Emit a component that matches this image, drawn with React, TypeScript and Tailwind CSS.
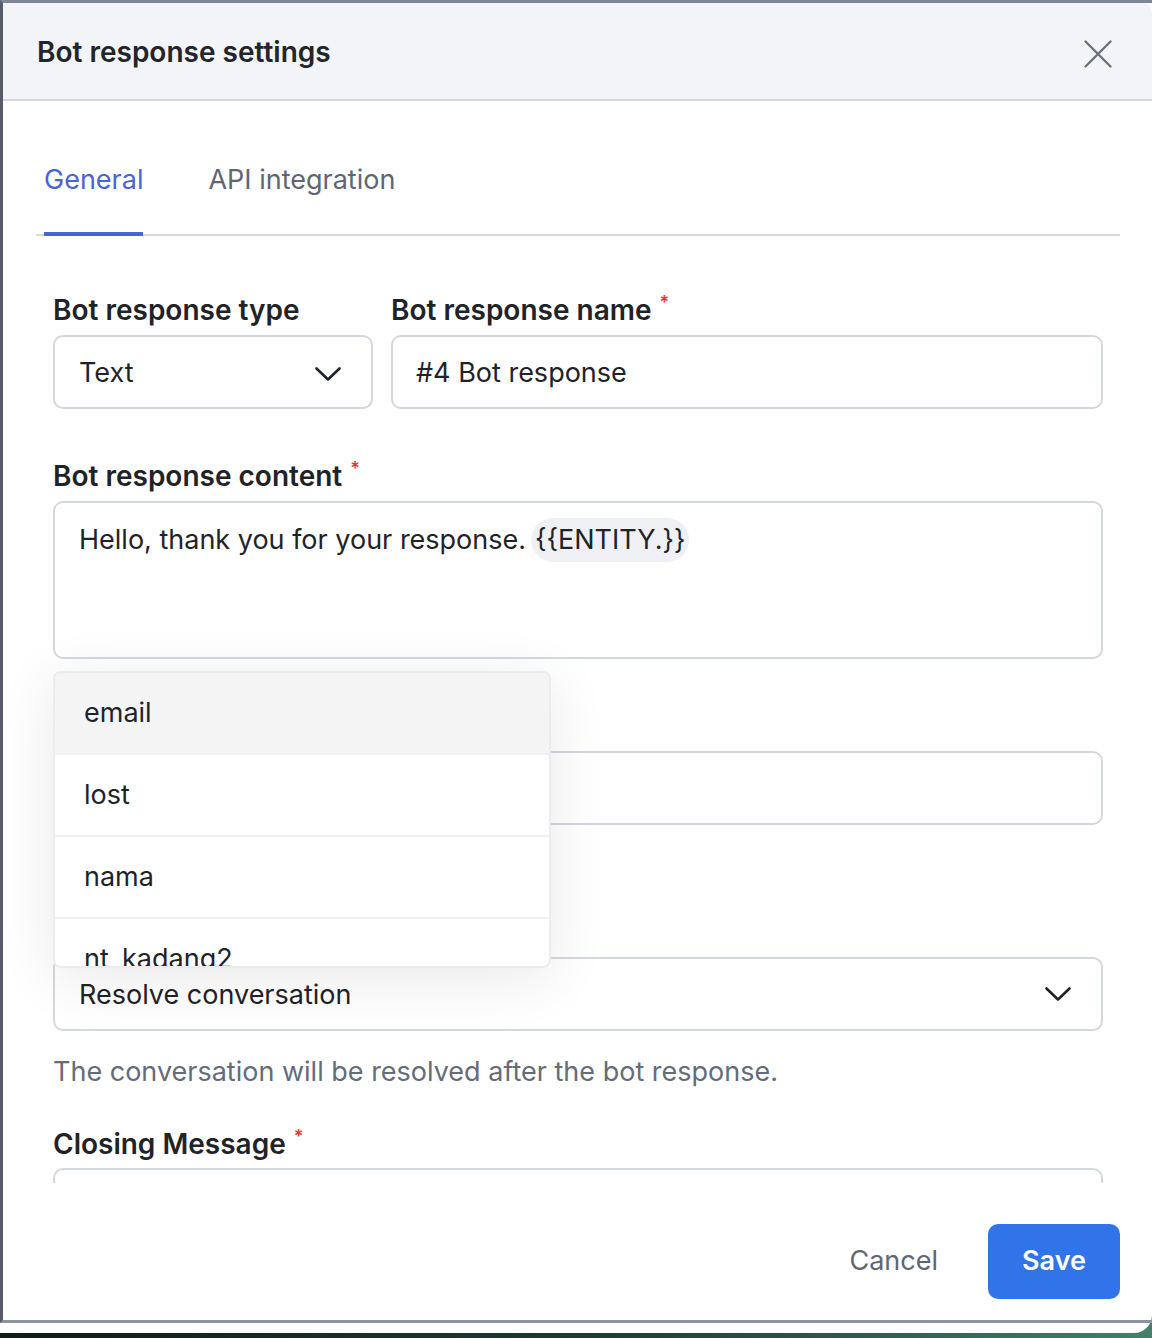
import { useState } from "react";

const font = { fontFamily: "Inter, 'Noto Sans', sans-serif" };

function Label({ text, required }: { text: string; required?: boolean }) {
  return (
    <div className="text-[28px] leading-[32px] font-semibold text-[#1f2328] whitespace-nowrap">
      {text}
      {required && (
        <span className="ml-[8px] align-top text-[18px] leading-[18px] font-semibold text-[#e03b3b]">*</span>
      )}
    </div>
  );
}

function Chevron() {
  return (
    <svg width="26" height="14" viewBox="0 0 26 14" fill="none" className="shrink-0">
      <path d="M1.5 1.5 L13 12.5 L24.5 1.5" stroke="#1f2328" strokeWidth="2.6" strokeLinecap="round" strokeLinejoin="round" />
    </svg>
  );
}

const options = ["email", "lost", "nama", "nt_kadang2"];

export default function App() {
  const [tab, setTab] = useState("general");

  return (
    <div style={font} className="h-[1338px] w-full bg-gradient-to-r from-[#0e1c1b] via-[#1d3a34] to-[#43806b]">
      <div className="h-[1333px] bg-white rounded-br-[18px] flex flex-col">
        <div className="h-[1323px] flex flex-col border-t-[3px] border-l-[3px] border-b-[3px] border-t-[#7e8797] border-l-[#575c66] border-b-[#8d94a0]">
          {/* header */}
          <div className="h-[98px] shrink-0 flex items-center justify-between bg-[#f3f4f8] border-b-2 border-[#d3d6dc] pl-[34px] pr-[40px] rounded-tr-[10px]">
            <h2 className="mt-[2px] text-[28px] font-semibold text-[#22252a]">Bot response settings</h2>
            <button className="p-0 mt-[6px]">
              <svg width="28" height="28" viewBox="0 0 28 28" fill="none">
                <path d="M1.5 1.5 L26.5 26.5 M26.5 1.5 L1.5 26.5" stroke="#6b717c" strokeWidth="2.4" strokeLinecap="round" />
              </svg>
            </button>
          </div>

          {/* body */}
          <div className="h-[1082px] shrink-0 overflow-hidden pl-[33px] pr-[32px]">
            <div className="flex gap-[65px] pl-[8px] pt-[63px] border-b-2 border-[#d6d9de]">
              <button
                onClick={() => setTab("general")}
                className={`-mb-[2px] pb-[36px] border-b-[4px] text-[27px] leading-[32px] ${
                  tab === "general" ? "border-[#4a63d7] text-[#4a63d7]" : "border-transparent text-[#5f6672]"
                }`}
              >
                General
              </button>
              <button
                onClick={() => setTab("api")}
                className={`-mb-[2px] pb-[36px] border-b-[4px] text-[27px] leading-[32px] ${
                  tab === "api" ? "border-[#4a63d7] text-[#4a63d7]" : "border-transparent text-[#5f6672]"
                }`}
              >
                API integration
              </button>
            </div>

            <div className="px-[17px]">
              {/* row 1 */}
              <div className="mt-[58px] flex gap-[18px]">
                <div className="w-[320px] flex flex-col gap-[9px]">
                  <Label text="Bot response type" />
                  <div className="h-[74px] flex items-center justify-between border-2 border-[#d4d7dd] rounded-[10px] pl-[24px] pr-[30px] pt-[3px] text-[27px] text-[#1f2328]">
                    <span>Text</span>
                    <Chevron />
                  </div>
                </div>
                <div className="flex-1 flex flex-col gap-[9px]">
                  <Label text="Bot response name" required />
                  <div className="h-[74px] flex items-center border-2 border-[#d4d7dd] rounded-[10px] px-[23px] pt-[3px] text-[27px] text-[#1f2328]">
                    #4 Bot response
                  </div>
                </div>
              </div>

              {/* content */}
              <div className="mt-[51px] flex flex-col gap-[9px]">
                <Label text="Bot response content" required />
                <div className="relative">
                  <div className="h-[158px] border-2 border-[#d4d7dd] rounded-[10px] pl-[24px] pr-[24px] pt-[15px] text-[27px] text-[#1f2328]">
                    <div className="flex items-center h-[44px]">
                      <span>Hello, thank you for your response.</span>
                      <span className="ml-[5px] h-[44px] flex items-center rounded-full bg-[#eff0f3] px-[4px]">
                        {"{{ENTITY.}}"}
                      </span>
                    </div>
                  </div>

                  {/* entity dropdown */}
                  <div className="absolute left-0 top-full mt-[12px] z-10 w-[498px] h-[297px] overflow-hidden rounded-[8px] border-2 border-[#ececee] bg-white shadow-[0_10px_60px_rgba(0,0,0,0.09)]">
                    {options.map((o, i) => (
                      <div
                        key={o}
                        className={`flex items-center pl-[29px] text-[27px] text-[#1f2328] ${
                          i === 0 ? "h-[80px] bg-[#f4f4f5]" : "h-[82px] border-t-2 border-[#f1f1f3]"
                        }`}
                      >
                        {o}
                      </div>
                    ))}
                  </div>
                </div>
              </div>

              {/* field under the dropdown */}
              <div className="mt-[51px] flex flex-col gap-[9px]">
                <div className="h-[32px]" />
                <div className="h-[74px] border-2 border-[#d4d7dd] rounded-[10px]" />
              </div>

              {/* after response */}
              <div className="mt-[91px] flex flex-col gap-[9px]">
                <div className="h-[32px]" />
                <div className="h-[74px] flex items-center justify-between border-2 border-[#d4d7dd] rounded-[10px] pl-[24px] pr-[30px] text-[27px] text-[#1f2328]">
                  <span className="pt-[3px]">Resolve conversation</span>
                  <Chevron />
                </div>
              </div>
              <p className="mt-[25px] text-[27px] leading-[32px] text-[#656c78]">
                The conversation will be resolved after the bot response.
              </p>

              <div className="mt-[40px] flex flex-col gap-[8px]">
                <Label text="Closing Message" required />
                <div className="h-[74px] border-2 border-[#d4d7dd] rounded-[10px]" />
              </div>
            </div>
          </div>

          {/* footer */}
          <div className="flex-1 flex items-start justify-end gap-[50px] pt-[41px] pr-[32px]">
            <button className="h-[75px] text-[27px] text-[#5f6672]">Cancel</button>
            <button className="h-[75px] w-[132px] rounded-[10px] bg-[#3174e9] text-[27px] font-semibold text-white">
              Save
            </button>
          </div>
        </div>
      </div>
    </div>
  );
}
